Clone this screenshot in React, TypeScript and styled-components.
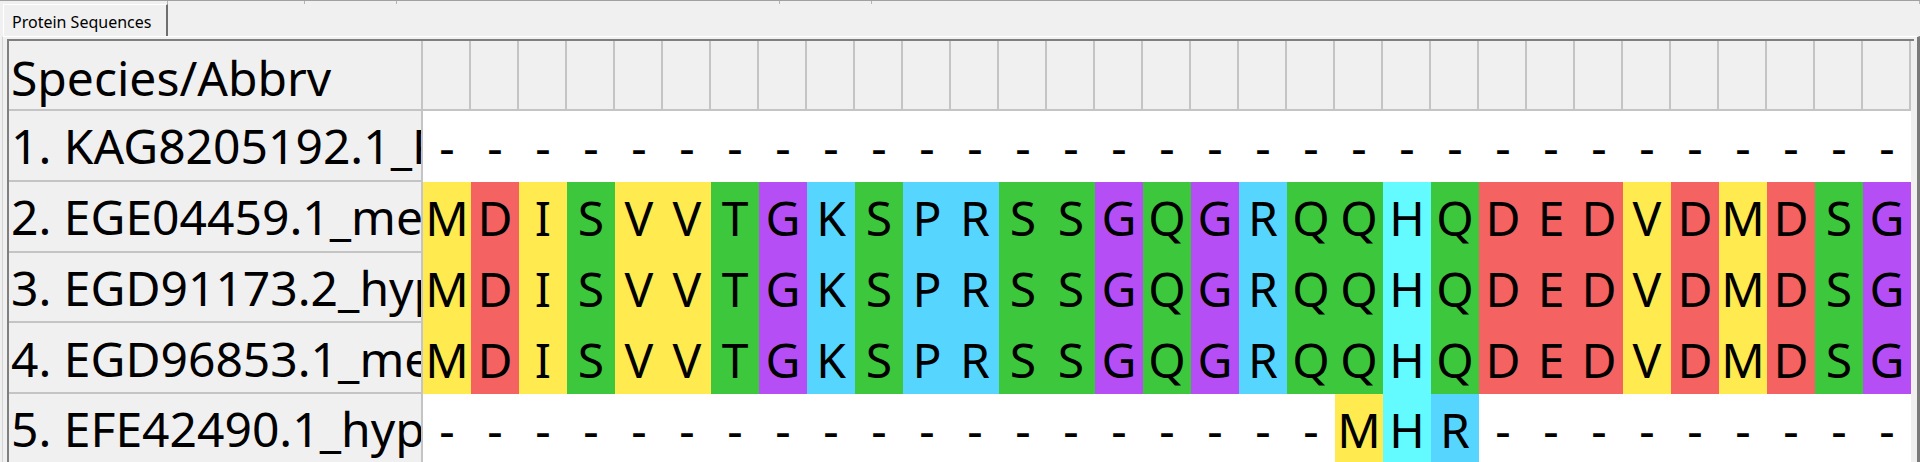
import React from 'react';
import styled, { createGlobalStyle } from 'styled-components';

const GlobalStyle = createGlobalStyle`
  html, body {
    margin: 0;
    padding: 0;
    background: #f0f0f0;
    overflow: hidden;
  }
  #root {
    width: 1920px;
    height: 462px;
  }
`;

const FONT = `'Noto Sans', 'Open Sans', 'DejaVu Sans', sans-serif`;
const ROW_H = 70.75;

const residueColors: Record<string, string> = {
  M: '#ffeb4f',
  I: '#ffeb4f',
  V: '#ffeb4f',
  L: '#ffeb4f',
  A: '#ffeb4f',
  D: '#f46262',
  E: '#f46262',
  S: '#3dc73d',
  T: '#3dc73d',
  Q: '#3dc73d',
  N: '#3dc73d',
  G: '#b54ff5',
  K: '#56d6ff',
  P: '#56d6ff',
  R: '#56d6ff',
  H: '#63fbff',
};

const Page = styled.div`
  width: 1920px;
  height: 462px;
  display: flex;
  flex-direction: column;
  overflow: hidden;
  font-family: ${FONT};
`;

const TopRule = styled.div`
  display: flex;
  height: 3px;
  border-top: 1px solid #a0a0a0;
  flex-shrink: 0;
`;

const RuleSegment = styled.div<{ $w?: number }>`
  width: ${(p) => (p.$w ? `${p.$w}px` : 'auto')};
  flex: ${(p) => (p.$w ? '0 0 auto' : '1')};
  border-right: 1px solid #b4b4b4;
  box-sizing: border-box;
`;

const TabRow = styled.div`
  display: flex;
  height: 32px;
  padding-left: 3px;
  flex-shrink: 0;
`;

const Tab = styled.div`
  width: 165px;
  box-sizing: border-box;
  border-left: 1px solid #ffffff;
  border-top: 1px solid #ffffff;
  border-right: 2px solid #6e6e6e;
  background: #f0f0f0;
  font-size: 16px;
  color: #000;
  display: flex;
  align-items: center;
  padding-left: 8px;
  padding-top: 2px;
  white-space: nowrap;
`;

const Pane = styled.div`
  flex: 1;
  min-height: 0;
  margin-left: 2px;
  border-top: 1px solid #ffffff;
  border-left: 1px solid #d4d4d4;
  border-right: 3px solid #7a7a7a;
  padding: 2px 3px 0 4px;
  display: flex;
  overflow: hidden;
`;

const Frame = styled.div`
  flex: 1;
  border-top: 2px solid #7f7f7f;
  border-left: 2px solid #7f7f7f;
  overflow: hidden;
  background: #f0f0f0;
`;

const Grid = styled.div`
  display: grid;
  grid-template-columns: 414px repeat(31, 48px);
  grid-auto-rows: ${ROW_H}px;
  grid-template-rows: 70px;
`;

const NameCell = styled.div<{ $head?: boolean }>`
  box-sizing: border-box;
  background: #f0f0f0;
  border-right: 2px solid #c4c4c4;
  border-bottom: 2px solid #c4c4c4;
  font-size: 48px;
  color: #000;
  white-space: nowrap;
  overflow: hidden;
  display: flex;
  align-items: center;
  padding-left: ${(p) => (p.$head ? 2 : 2)}px;
  padding-top: ${(p) => (p.$head ? 4 : 1)}px;
`;

const HeadCell = styled.div`
  box-sizing: border-box;
  background: #f0f0f0;
  border-right: 2px solid #c4c4c4;
  border-bottom: 2px solid #c4c4c4;
`;

const ResidueCell = styled.div<{ $bg: string }>`
  background: ${(p) => p.$bg};
  font-size: 48px;
  color: #000;
  display: flex;
  align-items: center;
  justify-content: center;
  padding-top: 2px;
  box-sizing: border-box;
  line-height: 1;
`;

const consensus = 'MDISVVTGKSPRSSGQGRQQHQDEDVDMDSG';
const gaps = '-'.repeat(consensus.length);

const rows = [
  { name: '1. KAG8205192.1_Putative protein', seq: gaps },
  { name: '2. EGE04459.1_methionine synthase', seq: consensus },
  { name: '3. EGD91173.2_hypothetical protein', seq: consensus },
  { name: '4. EGD96853.1_methyltransferase', seq: consensus },
  {
    name: '5. EFE42490.1_hypothetical protein',
    seq: gaps.slice(0, 19) + 'MHR' + gaps.slice(22),
  },
];

export default function App() {
  return (
    <>
      <GlobalStyle />
      <Page>
        <TopRule>
          <RuleSegment $w={168} />
          <RuleSegment $w={137} />
          <RuleSegment $w={92} />
          <RuleSegment $w={383} />
          <RuleSegment $w={92} />
          <RuleSegment />
        </TopRule>
        <TabRow>
          <Tab>Protein Sequences</Tab>
        </TabRow>
        <Pane>
          <Frame>
            <Grid>
              <NameCell $head>Species/Abbrv</NameCell>
              {consensus.split('').map((_, i) => (
                <HeadCell key={`h${i}`} />
              ))}
              {rows.map((row) => (
                <React.Fragment key={row.name}>
                  <NameCell>{row.name}</NameCell>
                  {row.seq.split('').map((ch, i) => (
                    <ResidueCell
                      key={i}
                      $bg={ch === '-' ? '#ffffff' : residueColors[ch] ?? '#ffffff'}
                    >
                      {ch}
                    </ResidueCell>
                  ))}
                </React.Fragment>
              ))}
            </Grid>
          </Frame>
        </Pane>
      </Page>
    </>
  );
}
